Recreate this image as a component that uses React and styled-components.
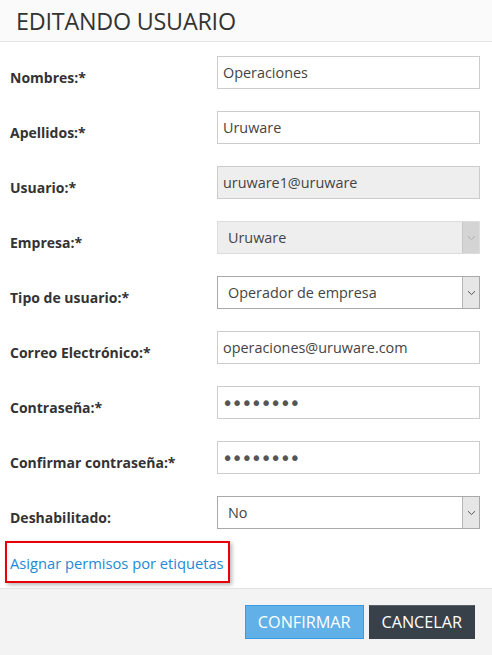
import styled, { createGlobalStyle } from 'styled-components';

const GlobalStyle = createGlobalStyle`
  html, body {
    margin: 0;
    padding: 0;
    background: #ffffff;
  }
  body {
    font-family: "Open Sans", "Noto Sans", "Liberation Sans", sans-serif;
    color: #333333;
  }
`;

const Modal = styled.div`
  width: 492px;
  height: 655px;
  display: flex;
  flex-direction: column;
  background: #ffffff;
`;

const Header = styled.header`
  height: 41px;
  background: #fafafa;
  border-bottom: 1px solid #e5e5e5;
  display: flex;
  align-items: center;
  padding-left: 16px;

  h2 {
    margin: 0;
    font-size: 23.3px;
    font-weight: 400;
    color: #333333;
    letter-spacing: -0.2px;
  }
`;

const Body = styled.div`
  flex: 1;
  padding: 14px 12px 0 10px;
  display: flex;
  flex-direction: column;
  gap: 22px;
`;

const Row = styled.div`
  display: flex;
  align-items: flex-start;
  height: 33px;
`;

const Label = styled.label`
  width: 207px;
  padding-top: 12px;
  font-size: 14px;
  font-weight: 700;
  color: #333333;
`;

const Input = styled.input`
  box-sizing: border-box;
  width: 263px;
  height: 33px;
  margin: 0;
  padding: 0 5px;
  border: 1px solid #cccccc;
  border-radius: 0;
  background: ${(p) => (p.disabled ? '#eeeeee' : '#ffffff')};
  font-family: inherit;
  font-size: 14.4px;
  color: #444444;
  outline: none;

  &[type='password'] {
    font-family: "DejaVu Sans", sans-serif;
    font-size: 19px;
    letter-spacing: -1.6px;
    color: #555555;
    padding-left: 4px;
  }
`;

const Select = styled.div`
  box-sizing: border-box;
  width: 263px;
  height: 33px;
  display: flex;
  border: 1px solid ${(p) => (p.disabled ? '#dddddd' : '#a9a9a9')};
  background: ${(p) => (p.disabled ? '#eeeeee' : '#ffffff')};
`;

const SelectValue = styled.span`
  flex: 1;
  display: flex;
  align-items: center;
  padding-left: 10px;
  font-size: 14.4px;
  color: #444444;
`;

const Arrow = styled.span`
  width: 16px;
  display: flex;
  align-items: center;
  justify-content: center;
  background: ${(p) => (p.disabled ? '#d4d4d4' : '#e6e6e6')};
  border-left: 1px solid ${(p) => (p.disabled ? '#c8c8c8' : '#b5b5b5')};
  color: ${(p) => (p.disabled ? '#b0b0b0' : '#555555')};
`;

const LinkBox = styled.div`
  align-self: flex-start;
  margin: -10px 0 0 -5px;
  width: 225px;
  height: 42px;
  box-sizing: border-box;
  border: 2px solid #e8000b;
  box-shadow: 2px 2px 4px rgba(0, 0, 0, 0.28);
  display: flex;
  align-items: flex-end;
  padding: 0 0 8px 3px;

  a {
    font-size: 14.7px;
    color: #2389d6;
    text-decoration: none;
    white-space: nowrap;
  }
`;

const Footer = styled.footer`
  height: 67px;
  box-sizing: border-box;
  background: #f3f3f3;
  border-top: 1px solid #e2e2e2;
  display: flex;
  justify-content: flex-end;
  align-items: flex-start;
  gap: 5px;
  padding: 16px 17px 0 0;
`;

const Button = styled.button`
  box-sizing: border-box;
  height: 34px;
  padding: 0 12px;
  border: 1px solid ${(p) => (p.primary ? '#3b9ae4' : '#383f48')};
  border-top-color: ${(p) => (p.primary ? '#3b9ae4' : '#59606a')};
  background: ${(p) => (p.primary ? '#62b0e8' : '#38404a')};
  color: #ffffff;
  font-family: inherit;
  font-size: 16.2px;
  border-radius: 0;
  cursor: pointer;
`;

function Chevron() {
  return (
    <svg width="9" height="6" viewBox="0 0 9 6" fill="none">
      <path d="M1 1.2 L4.5 4.6 L8 1.2" stroke="currentColor" strokeWidth="1" />
    </svg>
  );
}

function Field({ label, children }) {
  return (
    <Row>
      <Label>{label}</Label>
      {children}
    </Row>
  );
}

function Dropdown({ value, disabled }) {
  return (
    <Select disabled={disabled}>
      <SelectValue>{value}</SelectValue>
      <Arrow disabled={disabled}>
        <Chevron />
      </Arrow>
    </Select>
  );
}

export default function App() {
  return (
    <>
      <GlobalStyle />
      <Modal>
        <Header>
          <h2>EDITANDO USUARIO</h2>
        </Header>
        <Body>
          <Field label="Nombres:*">
            <Input readOnly value="Operaciones" />
          </Field>
          <Field label="Apellidos:*">
            <Input readOnly value="Uruware" />
          </Field>
          <Field label="Usuario:*">
            <Input disabled value="uruware1@uruware" />
          </Field>
          <Field label="Empresa:*">
            <Dropdown disabled value="Uruware" />
          </Field>
          <Field label="Tipo de usuario:*">
            <Dropdown value="Operador de empresa" />
          </Field>
          <Field label="Correo Electrónico:*">
            <Input readOnly value="operaciones@uruware.com" />
          </Field>
          <Field label="Contraseña:*">
            <Input type="password" readOnly value="12345678" />
          </Field>
          <Field label="Confirmar contraseña:*">
            <Input type="password" readOnly value="12345678" />
          </Field>
          <Field label="Deshabilitado:">
            <Dropdown value="No" />
          </Field>
          <LinkBox>
            <a href="#">Asignar permisos por etiquetas</a>
          </LinkBox>
        </Body>
        <Footer>
          <Button primary>CONFIRMAR</Button>
          <Button>CANCELAR</Button>
        </Footer>
      </Modal>
    </>
  );
}
